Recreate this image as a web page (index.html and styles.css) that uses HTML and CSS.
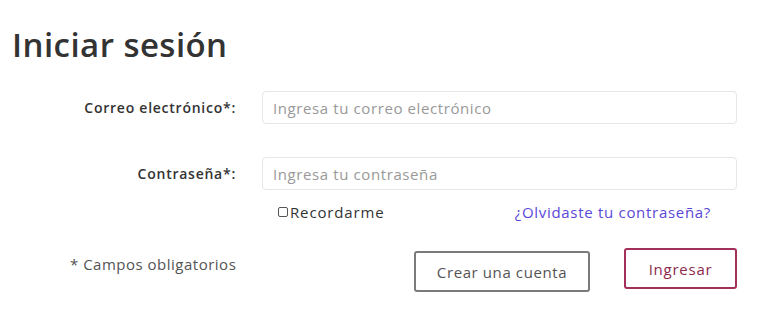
FILE: index.html
```html
<!DOCTYPE html>
<html>

<head>
    <meta http-equiv="Content-Type" content="text/html; charset=utf-8" />
    <title>Iniciar sesión</title>
    <link rel="stylesheet" href="styles.css">
</head>

<body>
    <div class="login">
        <h1 class="title">Iniciar sesión</h1>
        <div class="row">
            <label class="label" for="email">Correo electrónico*:</label>
            <input class="field" id="email" type="text" placeholder="Ingresa tu correo electrónico">
        </div>
        <div class="row row-pass">
            <label class="label" for="pass">Contraseña*:</label>
            <input class="field" id="pass" type="password" placeholder="Ingresa tu contraseña">
        </div>
        <div class="options">
            <label class="remember"><input class="check" type="checkbox">Recordarme</label>
            <a class="forgot" href="#">¿Olvidaste tu contraseña?</a>
        </div>
        <div class="footer">
            <p class="required">* Campos obligatorios</p>
            <div class="actions">
                <button class="btn btn-create">Crear una cuenta</button>
                <button class="btn btn-login">Ingresar</button>
            </div>
        </div>
    </div>
</body>

</html>
```
FILE: styles.css
```css
* {
    margin: 0;
    padding: 0;
    box-sizing: border-box;
}

body {
    background: #ffffff;
    color: #333333;
    font-family: "Open Sans", "Noto Sans", sans-serif;
}

.login {
    padding: 25px 31px 0 12px;
}

.title {
    font-size: 33px;
    font-weight: 600;
    color: #333333;
    line-height: 40px;
    letter-spacing: 0.45px;
}

.row {
    display: flex;
    align-items: center;
    margin-top: 26px;
}

.row-pass {
    margin-top: 33px;
}

.label {
    width: 250px;
    padding-right: 26px;
    text-align: right;
    font-size: 14px;
    font-weight: 600;
    color: #333333;
    letter-spacing: 0.75px;
}

.field {
    flex: 1;
    height: 33px;
    border: 1px solid #e6e6e6;
    border-radius: 4px;
    padding: 0 10px;
    font-family: inherit;
    font-size: 15px;
    color: #333333;
    letter-spacing: 0.6px;
    outline: none;
}

.field::placeholder {
    color: #999999;
}

.options {
    display: flex;
    align-items: center;
    justify-content: space-between;
    margin-top: 12px;
    padding-left: 266px;
    padding-right: 26px;
    font-size: 15px;
}

.remember {
    display: flex;
    align-items: center;
    gap: 2px;
    color: #333333;
    letter-spacing: 0.85px;
}

.check {
    appearance: none;
    width: 10px;
    height: 10px;
    border: 1px solid #555555;
    border-radius: 2px;
}

.forgot {
    color: #5a48d6;
    text-decoration: none;
    letter-spacing: 0.7px;
}

.footer {
    display: flex;
    align-items: center;
    justify-content: space-between;
    margin-top: 26px;
    padding-left: 58px;
}

.required {
    font-size: 15px;
    color: #545454;
    margin-top: -13px;
    letter-spacing: 0.5px;
}

.actions {
    display: flex;
    align-items: flex-start;
    gap: 34px;
}

.btn {
    height: 41px;
    background: #ffffff;
    border: 2px solid #7a7a7a;
    border-radius: 3px;
    font-family: inherit;
    font-size: 15px;
    color: #545454;
    letter-spacing: 0.6px;
    padding: 0 16px;
}

.btn-create {
    width: 176px;
    margin-top: 3px;
}

.btn-login {
    width: 113px;
    border-color: #a3305a;
    color: #8c2a4c;
    letter-spacing: 0.75px;
}
```
